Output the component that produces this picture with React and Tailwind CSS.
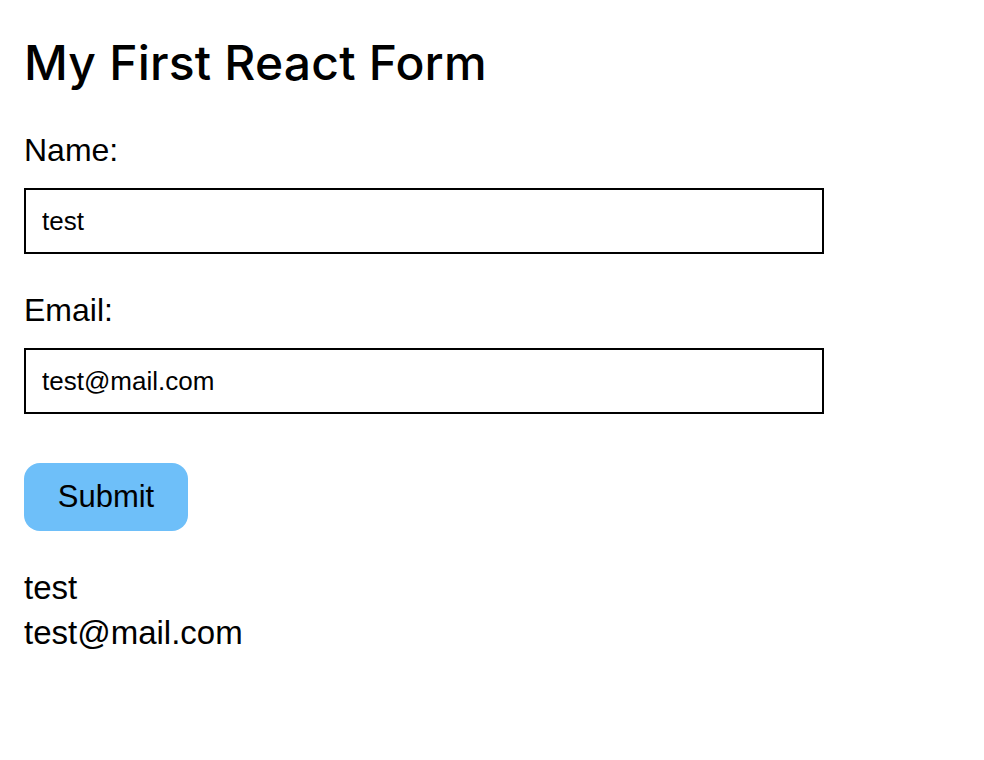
import React, { useState } from "react";

const App = () => {
  const [name, setName] = useState("test");
  const [email, setEmail] = useState("test@mail.com");
  const [submitted, setSubmitted] = useState({ name: "test", email: "test@mail.com" });

  const onSubmit = (e) => {
    e.preventDefault();
    setSubmitted({ name, email });
  };

  return (
    <main className="min-h-[760px] bg-white px-[24px] pt-[34px] text-black" style={{ fontFamily: '"Liberation Sans", Arial, sans-serif' }}>
      <h1 className="font-['Inter',sans-serif] text-[48px] leading-[58px] font-medium tracking-[0.2px]">My First React Form</h1>

      <form onSubmit={onSubmit} className="mt-[40px] w-[800px]">
        <label className="block text-[32px] leading-[36px]">Name:</label>
        <input
          type="text"
          value={name}
          onChange={(e) => setName(e.target.value)}
          className="mt-[20px] block h-[66px] w-[800px] border-2 border-black px-[16px] text-[26px] outline-none"
        />

        <label className="mt-[38px] block text-[32px] leading-[36px]">Email:</label>
        <input
          type="text"
          value={email}
          onChange={(e) => setEmail(e.target.value)}
          className="mt-[20px] block h-[66px] w-[800px] border-2 border-black px-[16px] text-[26px] outline-none"
        />

        <button
          type="submit"
          className="mt-[49px] h-[68px] w-[164px] rounded-[16px] bg-[#6ebff9] text-[31px]"
        >
          Submit
        </button>
      </form>

      <div className="mt-[34px] text-[33px] leading-[45px]">
        <p>{submitted.name}</p>
        <p>{submitted.email}</p>
      </div>
    </main>
  );
};

export default App;
